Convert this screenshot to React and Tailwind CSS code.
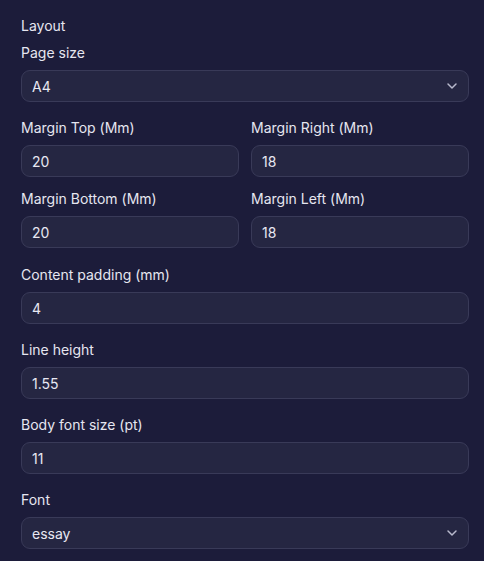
import React from "react";

function Chevron() {
  return (
    <svg width="16" height="16" viewBox="0 0 24 24" fill="none" stroke="#b8b9cc" strokeWidth="2.2" strokeLinecap="round" strokeLinejoin="round">
      <path d="m6 9 6 6 6-6" />
    </svg>
  );
}

function Field({ label, value, select }) {
  return (
    <div className="flex flex-col gap-[7px] min-w-0">
      <div className="text-[14px] leading-[20px] text-[#e6e6f0]">{label}</div>
      <div className="h-[32px] rounded-[9px] border border-[#393a58] bg-[#252642] flex items-center justify-between pl-[10px] pr-[8px] text-[14px] text-[#e8e8f2]">
        <span>{value}</span>
        {select && <Chevron />}
      </div>
    </div>
  );
}

export default function App() {
  return (
    <div className="min-h-[561px] bg-[#1c1c3a] pl-[21px] pr-[15px] pt-[16px]" style={{ fontFamily: "Inter, 'Noto Sans', sans-serif" }}>
      <div className="text-[14px] leading-[20px] text-[#e6e6f0] mb-[7px]">Layout</div>
      <div className="flex flex-col gap-[16px]">
        <Field label="Page size" value="A4" select />
        <div className="grid grid-cols-2 gap-x-[12px] gap-y-[12px] mb-[1px]">
          <Field label="Margin Top (Mm)" value="20" />
          <Field label="Margin Right (Mm)" value="18" />
          <Field label="Margin Bottom (Mm)" value="20" />
          <Field label="Margin Left (Mm)" value="18" />
        </div>
        <Field label="Content padding (mm)" value="4" />
        <Field label="Line height" value="1.55" />
        <Field label="Body font size (pt)" value="11" />
        <Field label="Font" value="essay" select />
      </div>
    </div>
  );
}
